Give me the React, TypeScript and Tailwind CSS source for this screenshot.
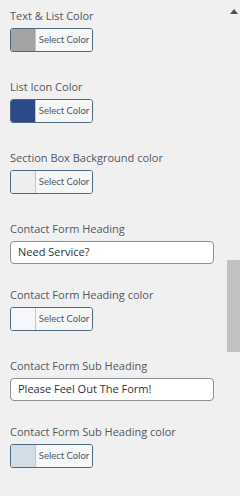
import React from "react";

type Field =
  | { kind: "color"; label: string; swatch: string }
  | { kind: "text"; label: string; value: string };

const FIELDS: Field[] = [
  { kind: "color", label: "Text & List Color", swatch: "#a3a3a3" },
  { kind: "color", label: "List Icon Color", swatch: "#2a4a8a" },
  { kind: "color", label: "Section Box Background color", swatch: "#eeeeef" },
  { kind: "text", label: "Contact Form Heading", value: "Need Service?" },
  { kind: "color", label: "Contact Form Heading color", swatch: "#f5f7fa" },
  { kind: "text", label: "Contact Form Sub Heading", value: "Please Feel Out The Form!" },
  { kind: "color", label: "Contact Form Sub Heading color", swatch: "#d3dde6" },
];

function ColorButton({ swatch }: { swatch: string }) {
  return (
    <div className="flex h-[24px] w-[83px] overflow-hidden rounded-[3px] border border-[#4e6880]">
      <div className="w-[25px] border-r border-[#c3c4c7]" style={{ background: swatch }} />
      <div
        className="flex flex-1 items-center justify-center bg-[#f6f7f7] text-[9.5px] text-[#50575e]"
        style={{ fontFamily: 'Lato, sans-serif' }}
      >
        Select Color
      </div>
    </div>
  );
}

export default function App() {
  return (
    <div
      className="flex h-[496px] w-[240px] overflow-hidden bg-[#f0f0f1]"
      style={{ fontFamily: '"Open Sans", "Noto Sans", sans-serif' }}
    >
      <div className="flex-1 pl-[10px] pt-[6px]">
        {FIELDS.map((f, i) => (
          <div key={i} className={f.kind === "color" ? "mb-[25px]" : "mb-[21px]"}>
            <div className="h-[20px] text-[11px] leading-[20px] text-[#50575e]">{f.label}</div>
            <div className="mt-[2px]">
              {f.kind === "color" ? (
                <ColorButton swatch={f.swatch} />
              ) : (
                <div className="flex h-[23px] w-[204px] items-center rounded-[4px] border border-[#8c8f94] bg-white pl-[7px] text-[11px] text-[#2c3338]">
                  {f.value}
                </div>
              )}
            </div>
          </div>
        ))}
      </div>

      {/* Scrollbar */}
      <div className="flex w-[13px] flex-col items-center">
        <svg width="8" height="5" viewBox="0 0 8 5" className="mt-[9px]">
          <polygon points="4,0 8,5 0,5" fill="#505050" />
        </svg>
        <div className="mt-[246px] h-[92px] w-full bg-[#c1c1c1]" />
      </div>
    </div>
  );
}
